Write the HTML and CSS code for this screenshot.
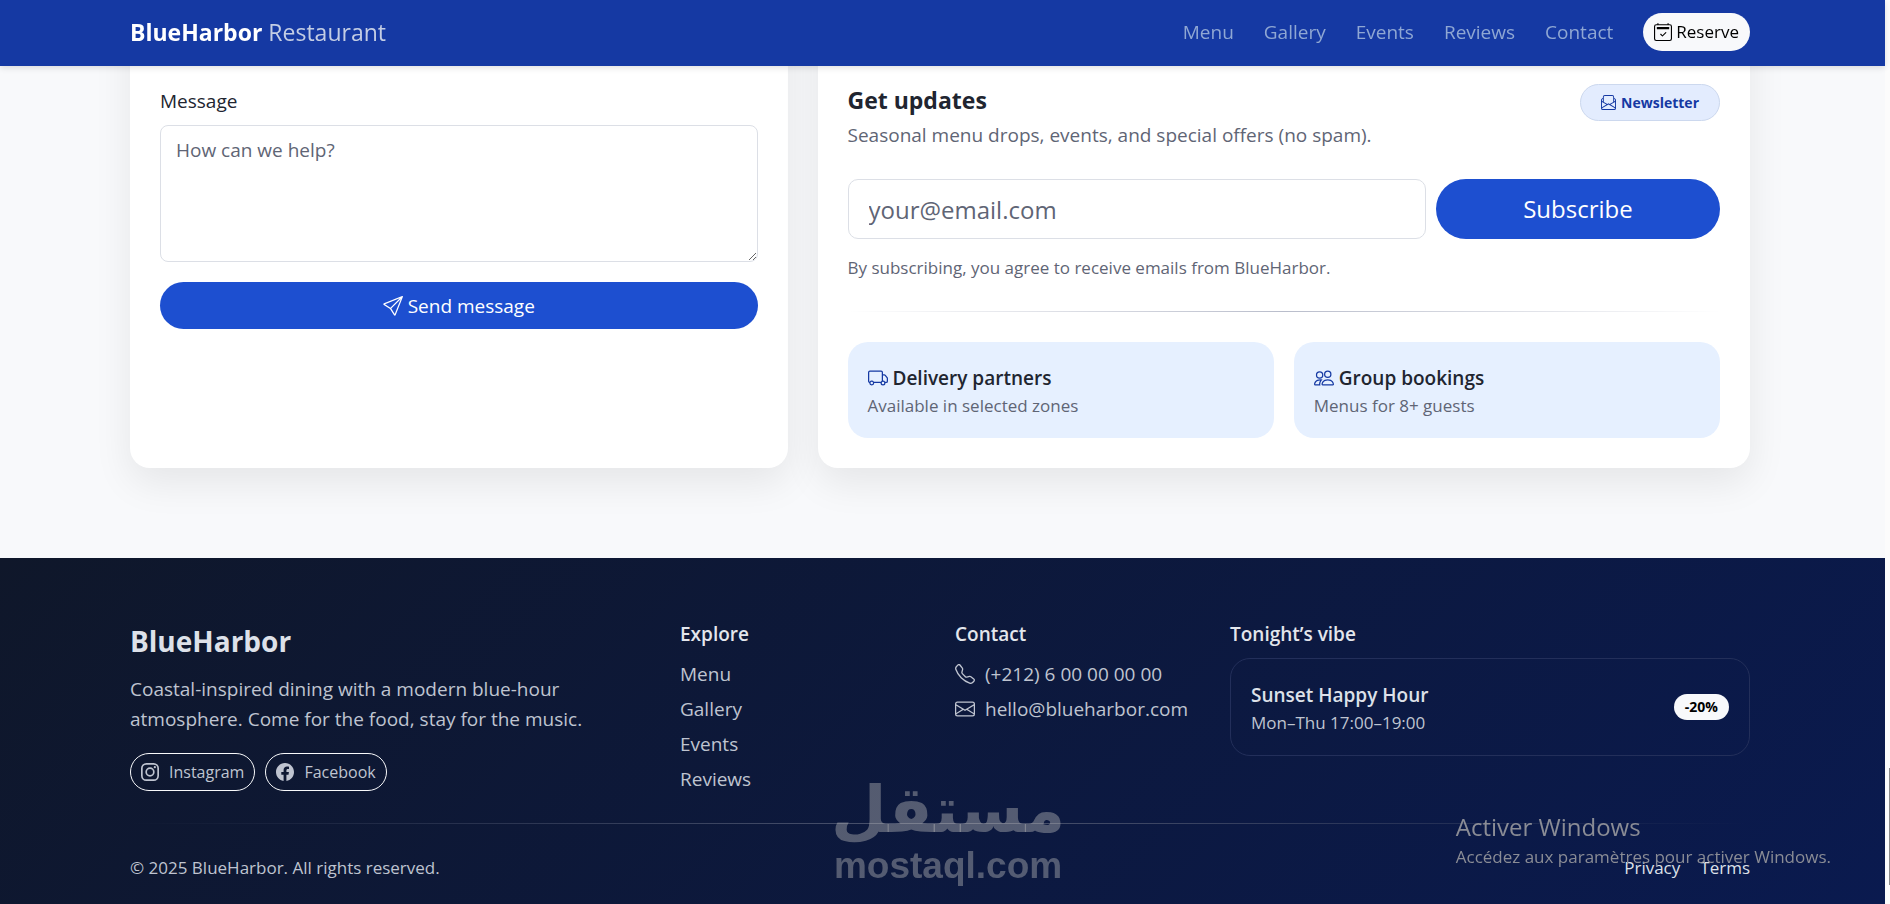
FILE: index.html
```html
<!DOCTYPE html>
<html lang="en">
<head>
<meta charset="utf-8">
<meta name="viewport" content="width=device-width, initial-scale=1">
<title>BlueHarbor Restaurant</title>
<link rel="stylesheet" href="styles.css">
</head>
<body>
<header class="topbar">
  <div class="container topbar-inner">
    <a class="brand" href="#"><strong>BlueHarbor</strong> <span>Restaurant</span></a>
    <nav class="nav">
      <a href="#menu">Menu</a>
      <a href="#gallery">Gallery</a>
      <a href="#events">Events</a>
      <a href="#reviews">Reviews</a>
      <a href="#contact">Contact</a>
      <a class="reserve" href="#reserve">
        <svg class="icon" viewBox="0 0 16 16"><path d="M10.854 8.146a.5.5 0 0 1 0 .708l-3 3a.5.5 0 0 1-.708 0l-1.5-1.5a.5.5 0 0 1 .708-.708L7.5 10.793l2.646-2.647a.5.5 0 0 1 .708 0"/><path d="M3.5 0a.5.5 0 0 1 .5.5V1h8V.5a.5.5 0 0 1 1 0V1h1a2 2 0 0 1 2 2v11a2 2 0 0 1-2 2H2a2 2 0 0 1-2-2V3a2 2 0 0 1 2-2h1V.5a.5.5 0 0 1 .5-.5M2 2a1 1 0 0 0-1 1v11a1 1 0 0 0 1 1h12a1 1 0 0 0 1-1V3a1 1 0 0 0-1-1z"/><path d="M2.5 4a.5.5 0 0 1 .5-.5h10a.5.5 0 0 1 .5.5v1a.5.5 0 0 1-.5.5H3a.5.5 0 0 1-.5-.5z"/></svg>
        Reserve
      </a>
    </nav>
  </div>
</header>

<main class="main">
  <div class="container grid">
    <form class="card card-contact">
      <label class="label" for="message">Message</label>
      <textarea class="field message" id="message" placeholder="How can we help?"></textarea>
      <button class="btn send" type="button">
        <svg class="icon" viewBox="0 0 16 16"><path d="M15.854.146a.5.5 0 0 1 .11.54l-5.819 14.547a.75.75 0 0 1-1.329.124l-3.178-4.995L.643 7.184a.75.75 0 0 1 .124-1.33L15.314.037a.5.5 0 0 1 .54.11ZM6.636 10.07l2.761 4.338L14.13 2.576zm6.787-8.201L1.591 6.602l4.339 2.76z"/></svg>
        Send message
      </button>
    </form>

    <section class="card card-news">
      <div class="news-head">
        <div>
          <h2 class="news-title">Get updates</h2>
          <p class="muted">Seasonal menu drops, events, and special offers (no spam).</p>
        </div>
        <span class="chip">
          <svg class="icon" viewBox="0 0 16 16"><path d="M4 0a2 2 0 0 0-2 2v1.133l-.941.502A2 2 0 0 0 0 5.4V14a2 2 0 0 0 2 2h12a2 2 0 0 0 2-2V5.4a2 2 0 0 0-1.059-1.765L14 3.133V2a2 2 0 0 0-2-2zm10 4.267.47.25A1 1 0 0 1 15 5.4v.817l-1 .6zm-1 3.15-3.75 2.25L8 8.917l-1.25.75L3 7.417V2a1 1 0 0 1 1-1h8a1 1 0 0 1 1 1zm-11-.6-1-.6V5.4a1 1 0 0 1 .53-.882L2 4.267zm13 .566v5.734l-4.778-2.867zm-.035 6.88A1 1 0 0 1 14 15H2a1 1 0 0 1-.965-.738L8 10.083zM1 13.116V7.383l4.778 2.867L1 13.117Z"/></svg>
          Newsletter
        </span>
      </div>
      <form class="subscribe">
        <input class="field email" type="email" aria-label="Email address" placeholder="your@email.com">
        <button class="btn subscribe-btn" type="button">Subscribe</button>
      </form>
      <p class="note">By subscribing, you agree to receive emails from BlueHarbor.</p>
      <div class="rule"></div>
      <div class="tiles">
        <div class="tile">
          <h3 class="tile-title"><svg class="icon" viewBox="0 0 16 16"><path d="M0 3.5A1.5 1.5 0 0 1 1.5 2h9A1.5 1.5 0 0 1 12 3.5V5h1.02a1.5 1.5 0 0 1 1.17.563l1.481 1.85a1.5 1.5 0 0 1 .329.938V10.5a1.5 1.5 0 0 1-1.5 1.5H14a2 2 0 1 1-4 0H5a2 2 0 1 1-3.998-.085A1.5 1.5 0 0 1 0 10.5zm1.294 7.456A2 2 0 0 1 4.732 11h5.536a2 2 0 0 1 .732-.732V3.5a.5.5 0 0 0-.5-.5h-9a.5.5 0 0 0-.5.5v7a.5.5 0 0 0 .294.456M12 10a2 2 0 0 1 1.732 1h.768a.5.5 0 0 0 .5-.5V8.35a.5.5 0 0 0-.11-.312l-1.48-1.85A.5.5 0 0 0 13.02 6H12zm-9 1a1 1 0 1 0 0 2 1 1 0 0 0 0-2m9 0a1 1 0 1 0 0 2 1 1 0 0 0 0-2"/></svg>Delivery partners</h3>
          <p class="tile-text">Available in selected zones</p>
        </div>
        <div class="tile">
          <h3 class="tile-title"><svg class="icon" viewBox="0 0 16 16"><path d="M15 14s1 0 1-1-1-4-5-4-5 3-5 4 1 1 1 1zm-7.978-1L7 12.996c.001-.264.167-1.03.76-1.72C8.312 10.629 9.282 10 11 10c1.717 0 2.687.63 3.24 1.276.593.69.758 1.457.76 1.72l-.008.002-.014.002zM11 7a2 2 0 1 0 0-4 2 2 0 0 0 0 4m3-2a3 3 0 1 1-6 0 3 3 0 0 1 6 0M6.936 9.28a6 6 0 0 0-1.23-.247A7 7 0 0 0 5 9c-4 0-5 3-5 4q0 1 1 1h4.216A2.24 2.24 0 0 1 5 13c0-1.01.377-2.042 1.09-2.904.243-.294.526-.569.846-.816M4.92 10A5.5 5.5 0 0 0 4 13H1c0-.26.164-1.03.76-1.724.545-.636 1.492-1.256 3.16-1.275ZM1.5 5.5a3 3 0 1 1 6 0 3 3 0 0 1-6 0m3-2a2 2 0 1 0 0 4 2 2 0 0 0 0-4"/></svg>Group bookings</h3>
          <p class="tile-text">Menus for 8+ guests</p>
        </div>
      </div>
    </section>
  </div>
</main>

<footer class="footer">
  <div class="container">
    <div class="grid">
      <div class="col-wide">
        <h2 class="footer-brand">BlueHarbor</h2>
        <p class="footer-about">Coastal-inspired dining with a modern blue-hour atmosphere. Come for the food, stay for the music.</p>
        <div class="socials">
          <a class="social" href="#instagram"><svg class="icon" viewBox="0 0 16 16"><g fill="none" stroke="currentColor" stroke-width="1.5"><rect x=".75" y=".75" width="14.5" height="14.5" rx="4"/><circle cx="8" cy="8" r="3.4"/></g><circle cx="12.3" cy="3.7" r="1"/></svg>Instagram</a>
          <a class="social" href="#facebook"><svg class="icon" viewBox="0 0 16 16"><path d="M16 8.049c0-4.446-3.582-8.05-8-8.05C3.58 0-.002 3.603-.002 8.05c0 4.017 2.926 7.347 6.75 7.951v-5.625h-2.03V8.05H6.75V6.275c0-2.017 1.195-3.131 3.022-3.131.876 0 1.791.157 1.791.157v1.98h-1.009c-.993 0-1.303.621-1.303 1.258v1.51h2.218l-.354 2.326H9.25V16c3.824-.604 6.75-3.934 6.75-7.951"/></svg>Facebook</a>
        </div>
      </div>
      <div class="col-narrow">
        <h3 class="footer-title">Explore</h3>
        <ul class="links">
          <li><a href="#menu">Menu</a></li>
          <li><a href="#gallery">Gallery</a></li>
          <li><a href="#events">Events</a></li>
          <li><a href="#reviews">Reviews</a></li>
        </ul>
      </div>
      <div class="col-narrow">
        <h3 class="footer-title">Contact</h3>
        <ul class="links">
          <li><svg class="icon" viewBox="0 0 16 16"><path d="M3.654 1.328a.678.678 0 0 0-1.015-.063L1.605 2.3c-.483.484-.661 1.169-.45 1.77a17.6 17.6 0 0 0 4.168 6.608 17.6 17.6 0 0 0 6.608 4.168c.601.211 1.286.033 1.77-.45l1.034-1.034a.678.678 0 0 0-.063-1.015l-2.307-1.794a.68.68 0 0 0-.58-.122l-2.19.547a1.75 1.75 0 0 1-1.657-.459L5.482 8.062a1.75 1.75 0 0 1-.46-1.657l.548-2.19a.68.68 0 0 0-.122-.58zM1.884.511a1.745 1.745 0 0 1 2.612.163L6.29 2.98c.329.423.445.974.315 1.494l-.547 2.19a.68.68 0 0 0 .178.643l2.457 2.457a.68.68 0 0 0 .644.178l2.189-.547a1.75 1.75 0 0 1 1.494.315l2.306 1.794c.829.645.905 1.87.163 2.611l-1.034 1.034c-.74.74-1.846 1.065-2.877.702a18.6 18.6 0 0 1-7.01-4.42 18.6 18.6 0 0 1-4.42-7.009c-.362-1.03-.037-2.137.703-2.877z"/></svg>(+212) 6 00 00 00 00</li>
          <li><svg class="icon" viewBox="0 0 16 16"><path d="M0 4a2 2 0 0 1 2-2h12a2 2 0 0 1 2 2v8a2 2 0 0 1-2 2H2a2 2 0 0 1-2-2zm2-1a1 1 0 0 0-1 1v.217l7 4.2 7-4.2V4a1 1 0 0 0-1-1zm13 2.383-4.708 2.825L15 11.105zm-.034 6.876-5.64-3.471L8 9.583l-1.326-.795-5.64 3.47A1 1 0 0 0 2 13h12a1 1 0 0 0 .966-.741M1 11.105l4.708-2.897L1 5.383z"/></svg>hello@blueharbor.com</li>
        </ul>
      </div>
      <div class="col-wide">
        <h3 class="footer-title vibe-title">Tonight’s vibe</h3>
        <div class="vibe">
          <div>
            <h4 class="vibe-name">Sunset Happy Hour</h4>
            <p class="vibe-time">Mon–Thu 17:00–19:00</p>
          </div>
          <span class="badge">-20%</span>
        </div>
      </div>
    </div>
    <div class="rule rule-light"></div>
    <div class="legal">
      <span>© 2025 BlueHarbor. All rights reserved.</span>
      <nav class="legal-links"><a href="#privacy">Privacy</a><a href="#terms">Terms</a></nav>
    </div>
  </div>
</footer>

<div class="watermark"><span class="watermark-ar" lang="ar" dir="rtl">مستقل</span><span class="watermark-en">mostaql.com</span></div>
<div class="activate"><span class="activate-title">Activer Windows</span><span class="activate-text">Accédez aux paramètres pour activer Windows.</span></div>
<div class="scroll-track"><div class="scroll-thumb"></div></div>
</body>
</html>
```
FILE: styles.css
```css
* { box-sizing: border-box; }

body {
  margin: 0;
  min-height: 100vh;
  display: flex;
  flex-direction: column;
  overflow: hidden;
  background: #f8f9fb;
  color: #212530;
  font-family: "Open Sans", "Noto Sans", sans-serif;
  font-size: 19px;
  line-height: 30px;
}

h2, h3, h4, p, ul { margin: 0; padding: 0; }
ul { list-style: none; }
a { color: inherit; text-decoration: none; }
button, input, textarea { font: inherit; }

.container { width: 100%; max-width: 1620px; margin: 0 auto; }
.grid { display: grid; grid-template-columns: repeat(12, minmax(0, 1fr)); column-gap: 30px; }
.icon { width: 20px; height: 20px; flex: none; fill: currentColor; }

/* Top bar */
.topbar {
  position: fixed;
  top: 0;
  left: 0;
  right: 5px;
  z-index: 10;
  padding: 0 5px 3px 0;
  background: #1539a3;
  box-shadow: 0 2px 6px rgba(0, 0, 0, .12);
}
.topbar-inner { display: flex; align-items: center; justify-content: space-between; height: 63px; }
.brand { font-size: 23px; color: #fff; }
.brand span { color: #c3cde4; }
.nav { display: flex; align-items: center; gap: 30px; color: #8fa7d3; }
.reserve {
  display: flex;
  align-items: center;
  gap: 4px;
  height: 38px;
  padding: 0 11px;
  border-radius: 19px;
  background: #f8f9fb;
  color: #000;
  font-size: 17px;
  font-weight: 500;
}
.reserve .icon { width: 18px; height: 18px; }

/* Cards */
.main { padding: 0 10px 90px 0; }
.card {
  padding: 84px 30px 30px;
  border-radius: 0 0 20px 20px;
  background: #fff;
  box-shadow: 0 15px 38px rgba(0, 0, 0, .08);
}
.card-contact { grid-column: span 5; display: flex; flex-direction: column; }
.card-news { grid-column: span 7; }
.label { margin: 2px 0 9px; }
.field {
  width: 100%;
  border: 1px solid #dcdfe6;
  border-radius: 8px;
  background: #fff;
  color: #212530;
}
.field::placeholder { color: #5f6575; opacity: 1; }
.message { height: 137px; padding: 9px 15px; resize: vertical; }
.btn { border: 0; border-radius: 30px; background: #1d4fd0; color: #fff; }
.send { display: flex; align-items: center; justify-content: center; gap: 5px; height: 47px; margin-top: 20px; }

.news-head { display: flex; justify-content: space-between; align-items: flex-start; }
.news-title { font-size: 23px; line-height: 32px; margin-bottom: 4px; }
.muted { color: #5f6575; }
.chip {
  display: flex;
  align-items: center;
  gap: 5px;
  height: 37px;
  padding: 0 20px;
  border: 1px solid #ccd8ee;
  border-radius: 19px;
  background: #e3ecfe;
  color: #1539a3;
  font-size: 14px;
  font-weight: 700;
}
.chip .icon { width: 15px; height: 15px; }
.subscribe { display: grid; grid-template-columns: repeat(12, minmax(0, 1fr)); gap: 10px; margin-top: 29px; }
.email, .subscribe-btn { height: 60px; font-size: 24px; }
.email { grid-column: span 8; padding: 0 20px; border-radius: 10px; }
.subscribe-btn { grid-column: span 4; }
.note { margin-top: 15px; color: #5f6575; font-size: 17px; line-height: 28px; }
.rule { height: 1px; margin: 29px 0 30px; background: linear-gradient(90deg, transparent, #b9bdcb, transparent); }
.tiles { display: grid; grid-template-columns: 1fr 1fr; gap: 20px; }
.tile { padding: 20px; border-radius: 20px; background: #e6f0ff; }
.tile-title { display: flex; align-items: center; gap: 5px; font-size: 19px; line-height: 32px; font-weight: 600; }
.tile-title .icon { color: #1539a3; }
.tile-text { color: #5f6575; font-size: 17px; line-height: 24px; }

/* Footer */
.footer {
  flex: 1;
  margin-right: 5px;
  padding: 60px 5px 20px 0;
  background: linear-gradient(135deg, #0f172a, #0a1a4f);
  color: #bfc4d0;
}
.col-wide { grid-column: span 4; }
.col-narrow { grid-column: span 2; white-space: nowrap; }
.footer-brand { font-size: 28px; line-height: 46px; color: #dde1e9; }
.footer-about { margin: 10px 0 19px; }
.socials { display: flex; gap: 10px; }
.social {
  display: flex;
  align-items: center;
  gap: 10px;
  height: 38px;
  padding: 0 10px;
  border: 1px solid #f8f9fb;
  border-radius: 19px;
  font-size: 16px;
}
.social .icon { width: 18px; height: 18px; }
.footer-title { margin-bottom: 9px; font-size: 19px; line-height: 32px; font-weight: 600; color: #e3e6ec; }
.links { display: grid; gap: 5px; }
.links li { display: flex; align-items: center; gap: 10px; }
.vibe {
  display: flex;
  align-items: center;
  justify-content: space-between;
  padding: 20px;
  border: 1px solid #232f5a;
  border-radius: 20px;
}
.vibe-title { margin-bottom: 8px; }
.vibe-name { font-size: 19px; line-height: 32px; font-weight: 600; color: #dde1e9; }
.vibe-time { font-size: 17px; line-height: 24px; }
.badge { padding: 0 11px; border-radius: 13px; background: #f8f9fb; color: #000; font-size: 14px; line-height: 26px; font-weight: 700; }
.rule-light { margin: 29px 0; background: linear-gradient(90deg, transparent, #4d556f, transparent); }
.legal { display: flex; justify-content: space-between; font-size: 17px; }
.legal-links { display: flex; gap: 20px; color: #dde1e9; }

/* Overlays */
.watermark {
  position: fixed;
  left: 831px;
  bottom: 18px;
  z-index: 20;
  display: flex;
  flex-direction: column;
  align-items: center;
  color: rgba(185, 185, 185, .42);
  font-weight: 700;
  pointer-events: none;
}
.watermark-ar { font-family: "DejaVu Sans", sans-serif; font-size: 64px; line-height: 72px; }
.watermark-en { font-family: "Liberation Sans", Arial, sans-serif; font-size: 37px; line-height: 40px; }
.activate {
  position: fixed;
  right: 59px;
  bottom: 32px;
  z-index: 20;
  display: flex;
  flex-direction: column;
  color: #8a8c95;
  pointer-events: none;
}
.activate-title { font-size: 24px; }
.activate-text { font-size: 17px; }
.scroll-track { position: fixed; top: 0; right: 0; bottom: 0; width: 5px; background: #fcfcfc; }
.scroll-thumb { position: absolute; right: 0; bottom: 19px; width: 1px; height: 117px; background: #8b8b8b; }
```
